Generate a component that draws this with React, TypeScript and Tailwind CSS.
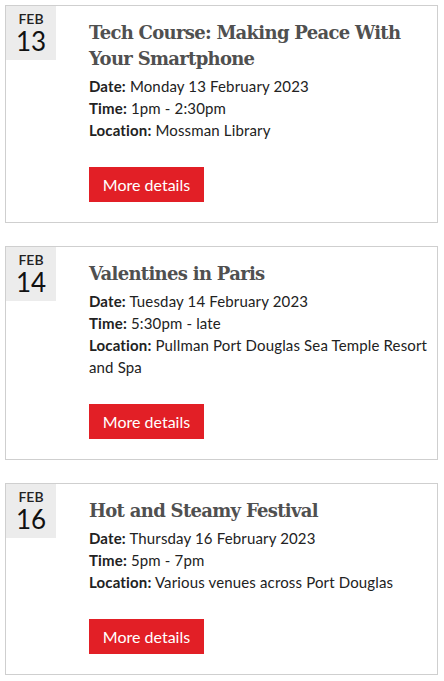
const events = [
  {
    month: "FEB",
    day: "13",
    title: "Tech Course: Making Peace With Your Smartphone",
    date: "Monday 13 February 2023",
    time: "1pm - 2:30pm",
    location: "Mossman Library",
  },
  {
    month: "FEB",
    day: "14",
    title: "Valentines in Paris",
    date: "Tuesday 14 February 2023",
    time: "5:30pm - late",
    location: "Pullman Port Douglas Sea Temple Resort and Spa",
  },
  {
    month: "FEB",
    day: "16",
    title: "Hot and Steamy Festival",
    date: "Thursday 16 February 2023",
    time: "5pm - 7pm",
    location: "Various venues across Port Douglas",
  },
];

type Event = (typeof events)[number];

function EventCard({ event }: { event: Event }) {
  return (
    <div className="flex border border-[#cfcfcf] bg-white">
      <div className="w-[50px] h-[54px] shrink-0 bg-[#ececec] flex flex-col items-center pt-[6px]">
        <span className="text-[14px] leading-[14px] font-semibold text-[#222]">{event.month}</span>
        <span className="mt-[2px] text-[26px] leading-[26px] text-[#111]">{event.day}</span>
      </div>
      <div className="flex-1 ml-[33px] pt-[14px] pb-[20px] pr-[6px]">
        <h2 className="font-['DejaVu_Serif',serif] font-bold text-[18px] leading-[26px] text-[#505050] tracking-[-0.7px]">
          {event.title}
        </h2>
        <div className="mt-[3px] text-[15px] leading-[22px] text-[#222] tracking-[0.15px]">
          <p>
            <span className="font-bold">Date:</span> {event.date}
          </p>
          <p>
            <span className="font-bold">Time:</span> {event.time}
          </p>
          <p>
            <span className="font-bold">Location:</span> {event.location}
          </p>
        </div>
        <button
          type="button"
          className="mt-[26px] h-[35px] w-[115px] bg-[#e21f26] text-white text-[16px]"
        >
          More details
        </button>
      </div>
    </div>
  );
}

export default function App() {
  return (
    <div className="bg-white min-h-screen pt-[5px] pl-[5px] pr-[6px] font-['Lato',sans-serif] flex flex-col gap-[23px]">
      {events.map((e) => (
        <EventCard key={e.day} event={e} />
      ))}
    </div>
  );
}
